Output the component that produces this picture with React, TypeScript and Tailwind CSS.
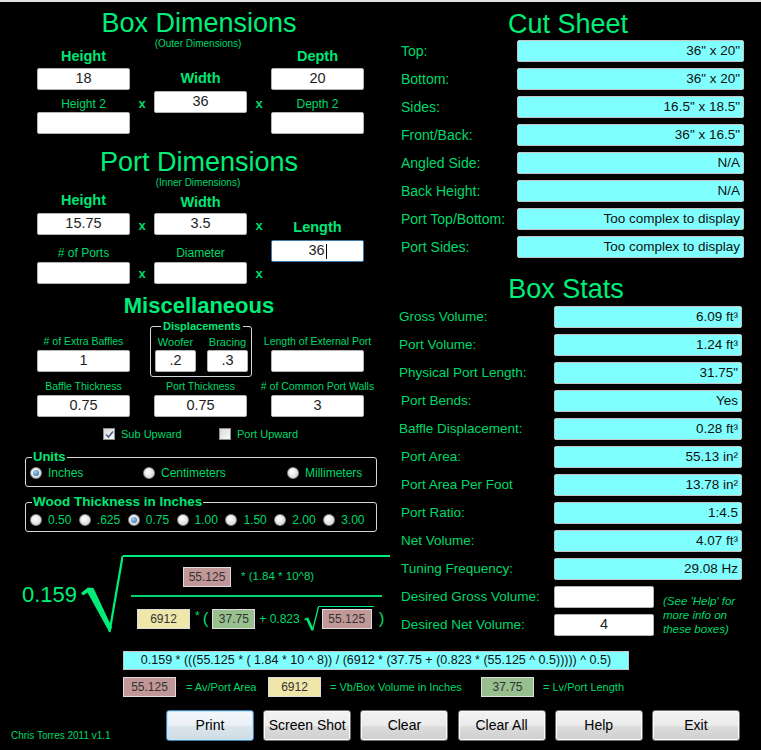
import React from 'react';

type Kids = { children?: React.ReactNode; className?: string };

const WhiteBox = ({ value = '', className = 'w-[93px]', focused = false }: { value?: string; className?: string; focused?: boolean }) => (
  <div
    className={`${className} h-[22px] shrink-0 flex items-center justify-center rounded-[2px] border bg-white text-[14.5px] text-[#1e1e1e] ${
      focused ? 'border-[#3d7bad]' : 'border-[#b4b4b4]'
    }`}
  >
    {value}
    {focused && <span className="ml-[1px] w-px h-[15px] bg-black" />}
  </div>
);

const CyanBox = ({ value, className = '' }: { value: string; className?: string }) => (
  <div className={`${className} h-[22px] shrink-0 flex items-center justify-end pr-[3px] rounded-[2px] border border-[#c4c4c4] bg-[#80ffff] text-[13.5px] text-[#111]`}>
    {value}
  </div>
);

const Head = ({ children, className = '' }: Kids) => (
  <div className={`h-[14px] leading-[14px] text-[14.5px] font-bold text-[#00e676] flex justify-center whitespace-nowrap ${className}`}>{children}</div>
);

const Sub = ({ children, className = '' }: Kids) => (
  <div className={`h-[14px] leading-[14px] text-[12px] text-[#00d86a] flex justify-center whitespace-nowrap ${className}`}>{children}</div>
);

const Tiny = ({ children, className = '' }: Kids) => (
  <div className={`h-[14px] leading-[14px] text-[10.5px] text-[#00d86a] flex justify-center whitespace-nowrap ${className}`}>{children}</div>
);

const Times = ({ className = '' }: { className?: string }) => (
  <div className={`h-[14px] leading-[14px] text-[13px] font-bold text-center text-[#00d86a] ${className}`}>x</div>
);

const Radio = ({ on = false }: { on?: boolean }) => (
  <span className="w-[12px] h-[12px] shrink-0 rounded-full border border-[#8a8a8a] bg-[radial-gradient(circle_at_40%_35%,#ffffff,#cfcfcf)] flex items-center justify-center">
    {on && <span className="w-[6px] h-[6px] rounded-full bg-[radial-gradient(circle_at_40%_35%,#9bd6ff,#1b5c98)]" />}
  </span>
);

const Check = ({ on = false }: { on?: boolean }) => (
  <span className="w-[12px] h-[12px] shrink-0 border border-[#8e8f8f] bg-[linear-gradient(to_bottom_right,#d8d8d8,#fbfbfb)] flex items-center justify-center">
    {on && (
      <svg width="9" height="9" viewBox="0 0 9 9">
        <path d="M1 4.5 L3.5 7 L8 1.5" stroke="#4a5f86" strokeWidth="1.6" fill="none" />
      </svg>
    )}
  </span>
);

const Swatch = ({ value, className }: { value: string; className: string }) => (
  <div className={`${className} h-[20px] shrink-0 flex items-center justify-center border border-[#dcdcdc] text-[12px] text-[#333]`}>{value}</div>
);

const Btn = ({ text, primary = false }: { text: string; primary?: boolean }) => (
  <button
    className={`w-[88px] h-[31px] rounded-[3px] border text-[14px] text-black ${
      primary
        ? 'border-[#3c7fb1] shadow-[inset_0_0_0_1px_#bfe6fa] bg-[linear-gradient(to_bottom,#f4f8fb_0%,#e9f0f5_50%,#dbe5ec_51%,#d0dce5_100%)]'
        : 'border-[#707070] shadow-[inset_0_0_0_1px_#fcfcfc] bg-[linear-gradient(to_bottom,#f2f2f2_0%,#ebebeb_50%,#dddddd_51%,#cfcfcf_100%)]'
    }`}
  >
    {text}
  </button>
);

const cutSheet = [
  ['Top:', '36" x 20"'],
  ['Bottom:', '36" x 20"'],
  ['Sides:', '16.5" x 18.5"'],
  ['Front/Back:', '36" x 16.5"'],
  ['Angled Side:', 'N/A'],
  ['Back Height:', 'N/A'],
  ['Port Top/Bottom:', 'Too complex to display'],
  ['Port Sides:', 'Too complex to display'],
];

const stats = [
  ['Gross Volume:', '6.09 ft³', 'pl-[9px]'],
  ['Port Volume:', '1.24 ft³', 'pl-[9px]'],
  ['Physical Port Length:', '31.75"', 'pl-[9px]'],
  ['Port Bends:', 'Yes', 'pl-[11px]'],
  ['Baffle Displacement:', '0.28 ft³', 'pl-[9px]'],
  ['Port Area:', '55.13 in²', 'pl-[11px]'],
  ['Port Area Per Foot', '13.78 in²', 'pl-[11px]'],
  ['Port Ratio:', '1:4.5', 'pl-[11px]'],
  ['Net Volume:', '4.07 ft³', 'pl-[11px]'],
  ['Tuning Frequency:', '29.08 Hz', 'pl-[11px]'],
];

const woods = ['0.50', '.625', '0.75', '1.00', '1.50', '2.00', '3.00'];

const LeftColumn = () => (
  <div className="w-[390px] shrink-0 flex flex-col">
    {/* Box Dimensions */}
    <div className="mt-[6px] pl-[8px] h-[30px] leading-[30px] text-[27px] text-center text-[#00ee78]">Box Dimensions</div>
    <div className="pl-[6px] h-[12px] leading-[12px] text-[10px] text-center text-[#00d86a]">(Outer Dimensions)</div>
    <div className="-mt-[1px] ml-[37px] grid grid-cols-[93px_24px_93px_24px_93px] items-start">
      <div className="flex flex-col">
        <Head>Height</Head>
        <WhiteBox value="18" className="w-[93px] mt-[5px]" />
        <Sub className="mt-[7px]">Height 2</Sub>
        <WhiteBox className="w-[93px] mt-[1px]" />
      </div>
      <Times className="mt-[48px]" />
      <div className="flex flex-col">
        <Head className="mt-[22px]">Width</Head>
        <WhiteBox value="36" className="w-[93px] mt-[6px]" />
      </div>
      <Times className="mt-[48px]" />
      <div className="flex flex-col">
        <Head>Depth</Head>
        <WhiteBox value="20" className="w-[93px] mt-[5px]" />
        <Sub className="mt-[7px]">Depth 2</Sub>
        <WhiteBox className="w-[93px] mt-[1px]" />
      </div>
    </div>

    {/* Port Dimensions */}
    <div className="mt-[13px] pl-[8px] h-[30px] leading-[30px] text-[27px] text-center text-[#00ee78]">Port Dimensions</div>
    <div className="pl-[6px] h-[12px] leading-[12px] text-[10px] text-center text-[#00d86a]">(Inner Dimensions)</div>
    <div className="-mt-[1px] ml-[37px] grid grid-cols-[93px_24px_93px_24px_93px] items-start">
      <div className="flex flex-col">
        <Head className="mt-[5px]">Height</Head>
        <WhiteBox value="15.75" className="w-[93px] mt-[6px]" />
        <Sub className="mt-[11px]"># of Ports</Sub>
        <WhiteBox className="w-[93px] mt-[2px]" />
      </div>
      <div className="flex flex-col">
        <Times className="mt-[31px]" />
        <Times className="mt-[34px]" />
      </div>
      <div className="flex flex-col">
        <Head className="mt-[7px]">Width</Head>
        <WhiteBox value="3.5" className="w-[93px] mt-[4px]" />
        <Sub className="mt-[11px]">Diameter</Sub>
        <WhiteBox className="w-[93px] mt-[2px]" />
      </div>
      <div className="flex flex-col">
        <Times className="mt-[31px]" />
        <Times className="mt-[34px]" />
      </div>
      <div className="flex flex-col">
        <Head className="mt-[32px]">Length</Head>
        <WhiteBox value="36" focused className="w-[93px] mt-[6px]" />
      </div>
    </div>

    {/* Miscellaneous */}
    <div className="mt-[9px] pl-[8px] h-[26px] leading-[26px] text-[22px] font-bold text-center text-[#00ee78]">Miscellaneous</div>
    <div className="ml-[37px] grid grid-cols-[93px_24px_93px_24px_93px] items-start">
      <div className="flex flex-col">
        <Tiny className="mt-[15px]"># of Extra Baffles</Tiny>
        <WhiteBox value="1" className="w-[93px] mt-[2px]" />
      </div>
      <div />
      <fieldset className="mt-[1px] -ml-[4px] w-[102px] border border-[#d6d6d6] rounded-[3px] pl-[4px] pr-[3px] pb-[4px]">
        <legend className="ml-[6px] px-[2px] h-[12px] leading-[12px] text-[11px] font-bold text-[#00e676]">Displacements</legend>
        <div className="flex gap-[11px]">
          <div className="flex flex-col w-[41px]">
            <Tiny className="mt-[3px] text-[11px]">Woofer</Tiny>
            <WhiteBox value=".2" className="w-[41px] mt-[1px]" />
          </div>
          <div className="flex flex-col w-[41px]">
            <Tiny className="mt-[3px] text-[11px]">Bracing</Tiny>
            <WhiteBox value=".3" className="w-[41px] mt-[1px]" />
          </div>
        </div>
      </fieldset>
      <div />
      <div className="flex flex-col">
        <Tiny className="mt-[15px]">Length of External Port</Tiny>
        <WhiteBox className="w-[93px] mt-[2px]" />
      </div>
    </div>
    <div className="ml-[37px] grid grid-cols-[93px_24px_93px_24px_93px] items-start">
      <div className="flex flex-col">
        <Tiny className="mt-[2px]">Baffle Thickness</Tiny>
        <WhiteBox value="0.75" className="w-[93px] mt-[2px]" />
      </div>
      <div />
      <div className="flex flex-col">
        <Tiny className="mt-[2px]">Port Thickness</Tiny>
        <WhiteBox value="0.75" className="w-[93px] mt-[2px]" />
      </div>
      <div />
      <div className="flex flex-col">
        <Tiny className="mt-[2px]"># of Common Port Walls</Tiny>
        <WhiteBox value="3" className="w-[93px] mt-[2px]" />
      </div>
    </div>
    <div className="mt-[10px] ml-[103px] h-[14px] flex items-center text-[11px] text-[#00d86a]">
      <div className="w-[116px] flex items-center gap-[6px]">
        <Check on />
        <span>Sub Upward</span>
      </div>
      <div className="flex items-center gap-[6px]">
        <Check />
        <span>Port Upward</span>
      </div>
    </div>

    {/* Units */}
    <fieldset className="mt-[9px] ml-[25px] w-[352px] border border-[#d6d6d6] rounded-[3px] px-[4px] pb-[6px]">
      <legend className="ml-[2px] px-[1px] h-[14px] leading-[14px] text-[13px] font-bold text-[#00e676]">Units</legend>
      <div className="mt-[2px] h-[14px] flex items-center text-[12px] text-[#00d86a]">
        <div className="w-[113px] flex items-center gap-[6px]">
          <Radio on />
          <span>Inches</span>
        </div>
        <div className="w-[144px] flex items-center gap-[6px]">
          <Radio />
          <span>Centimeters</span>
        </div>
        <div className="flex items-center gap-[6px]">
          <Radio />
          <span>Millimeters</span>
        </div>
      </div>
    </fieldset>
    <fieldset className="mt-[8px] ml-[25px] w-[352px] border border-[#d6d6d6] rounded-[3px] px-[4px] pb-[6px]">
      <legend className="ml-[2px] px-[1px] h-[14px] leading-[14px] text-[13.5px] font-bold text-[#00e676]">Wood Thickness in Inches</legend>
      <div className="mt-[2px] h-[14px] grid grid-cols-7 items-center text-[12px] text-[#00d86a]">
        {woods.map((w) => (
          <div key={w} className="flex items-center gap-[6px]">
            <Radio on={w === '0.75'} />
            <span>{w}</span>
          </div>
        ))}
      </div>
    </fieldset>

    {/* Formula */}
    <div className="mt-[23px] flex items-start">
      <div className="w-[80px] shrink-0 pl-[22px] mt-[28px] h-[24px] leading-[24px] text-[22px] text-[#00ee78]">0.159</div>
      <svg width="43" height="80" viewBox="0 0 43 80" className="shrink-0">
        <polygon points="1,38 8,32.5 13.5,33 32,72.5 29.5,77.5 7.5,37.5 3,40.5" fill="#00ee78" />
        <path d="M29.5 77 L42.6 1" stroke="#00ee78" strokeWidth="2.2" fill="none" />
      </svg>
      <div className="w-[267px] shrink-0 border-t-2 border-[#00ee78] flex flex-col">
        <div className="mt-[10px] pl-[60px] flex items-center">
          <Swatch value="55.125" className="w-[48px] bg-[#c29797]" />
          <span className="ml-[10px] text-[11.5px] text-[#00d86a]">* (1.84 * 10^8)</span>
        </div>
        <div className="mt-[8px] ml-[8px] w-[251px] h-[2px] bg-[#00d46c]" />
        <div className="mt-[12px] pl-[14px] flex items-start">
          <Swatch value="6912" className="w-[53px] bg-[#efe7aa]" />
          <span className="ml-[5px] h-[20px] leading-[14px] text-[12px] text-[#00d86a]">*</span>
          <span className="ml-[3px] h-[20px] leading-[20px] text-[17px] text-[#00d86a]">(</span>
          <Swatch value="37.75" className="ml-[4px] w-[43px] bg-[#98bf8e]" />
          <span className="ml-[4px] h-[20px] leading-[20px] text-[12px] text-[#00d86a] whitespace-nowrap">+ 0.823</span>
          <div className="-mt-[3px] ml-[4px] flex items-start">
            <svg width="15" height="26" viewBox="0 0 15 26" className="shrink-0">
              <path d="M0.5 14 L3 12" stroke="#00ee78" strokeWidth="1.5" fill="none" />
              <path d="M3 12 L8.5 24" stroke="#00ee78" strokeWidth="2.6" fill="none" />
              <path d="M8.5 24.5 L14.6 0.5" stroke="#00ee78" strokeWidth="1.3" fill="none" />
            </svg>
            <div className="border-t border-[#00ee78] pl-[3px] pr-[2px] pt-[2px]">
              <Swatch value="55.125" className="w-[50px] bg-[#c29797]" />
            </div>
          </div>
          <span className="ml-[5px] h-[20px] leading-[20px] text-[17px] text-[#00d86a]">)</span>
        </div>
      </div>
    </div>
  </div>
);

const RightColumn = () => (
  <div className="w-[371px] shrink-0 flex flex-col">
    <div className="mt-[7px] pr-[15px] h-[30px] leading-[30px] text-[27px] text-center text-[#00ee78]">Cut Sheet</div>
    <div className="mt-[1px] flex flex-col gap-[6px]">
      {cutSheet.map(([label, value]) => (
        <div key={label} className="flex items-center h-[22px]">
          <div className="w-[127px] shrink-0 pl-[11px] text-[14px] text-[#00d86a] whitespace-nowrap">{label}</div>
          <CyanBox value={value} className="w-[227px]" />
        </div>
      ))}
    </div>

    <div className="mt-[16px] pr-[19px] h-[30px] leading-[30px] text-[27px] text-center text-[#00ee78]">Box Stats</div>
    <div className="mt-[2px] flex flex-col gap-[6px]">
      {stats.map(([label, value, pad]) => (
        <div key={label} className="flex items-center h-[22px]">
          <div className={`w-[164px] shrink-0 ${pad} text-[13.5px] text-[#00d86a] whitespace-nowrap`}>{label}</div>
          <CyanBox value={value} className="w-[188px]" />
        </div>
      ))}
      <div className="flex items-start">
        <div className="flex flex-col gap-[6px]">
          <div className="flex items-center h-[22px]">
            <div className="w-[164px] shrink-0 pl-[11px] text-[13.5px] text-[#00d86a] whitespace-nowrap">Desired Gross Volume:</div>
            <WhiteBox className="w-[100px]" />
          </div>
          <div className="flex items-center h-[22px]">
            <div className="w-[164px] shrink-0 pl-[11px] text-[13.5px] text-[#00d86a] whitespace-nowrap">Desired Net Volume:</div>
            <WhiteBox value="4" className="w-[100px]" />
          </div>
        </div>
        <div className="ml-[9px] mt-[8px] leading-[14px] text-[11.5px] italic text-[#00d86a]">
          <div>(See 'Help' for</div>
          <div>more info on</div>
          <div>these boxes)</div>
        </div>
      </div>
    </div>
  </div>
);

export default function App() {
  return (
    <div className="w-[761px] h-[750px] overflow-hidden bg-black border-t-2 border-[#e2e2e2] flex flex-col font-['Liberation_Sans',Arial,sans-serif]">
      <div className="flex h-[634px] shrink-0">
        <LeftColumn />
        <RightColumn />
      </div>

      <div className="mt-[15px] ml-[123px] w-[506px] h-[19px] flex items-center justify-center border border-[#c4c4c4] bg-[#80ffff] text-[12.5px] text-[#111]">
        0.159 * (((55.125 * ( 1.84 * 10 ^ 8)) / (6912 * (37.75 + (0.823 * (55.125 ^ 0.5))))) ^ 0.5)
      </div>

      <div className="mt-[7px] ml-[123px] h-[20px] flex items-center text-[11px] text-[#00d86a]">
        <Swatch value="55.125" className="w-[53px] bg-[#c29797]" />
        <span className="w-[92px] pl-[10px] whitespace-nowrap">= Av/Port Area</span>
        <Swatch value="6912" className="w-[53px] bg-[#efe7aa]" />
        <span className="w-[160px] pl-[9px] whitespace-nowrap">= Vb/Box Volume in Inches</span>
        <Swatch value="37.75" className="w-[53px] bg-[#98bf8e]" />
        <span className="pl-[9px] whitespace-nowrap">= Lv/Port Length</span>
      </div>

      <div className="mt-[13px] h-[31px] flex items-end">
        <div className="w-[166px] shrink-0 pl-[11px] -mb-[1px] h-[12px] leading-[12px] text-[10px] text-[#00d86a] whitespace-nowrap">Chris Torres 2011 v1.1</div>
        <div className="flex gap-[9.2px]">
          <Btn text="Print" primary />
          <Btn text="Screen Shot" />
          <Btn text="Clear" />
          <Btn text="Clear All" />
          <Btn text="Help" />
          <Btn text="Exit" />
        </div>
      </div>
    </div>
  );
}
